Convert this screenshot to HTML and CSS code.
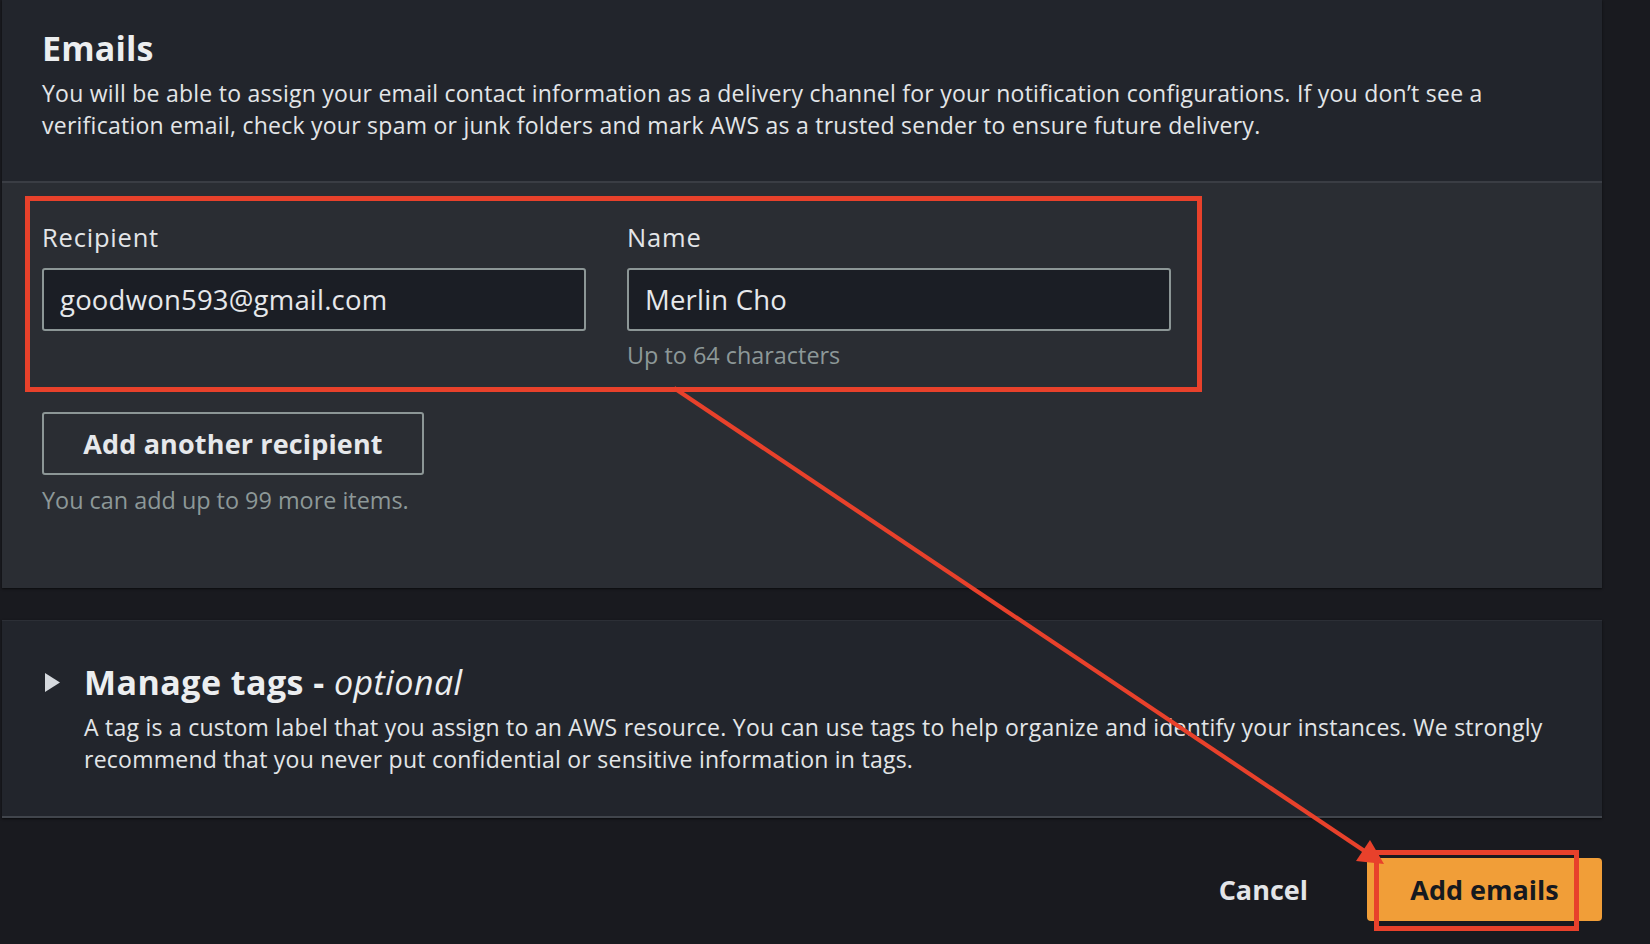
FILE: index.html
```html
<!DOCTYPE html>
<html lang="en">
<head>
<meta charset="utf-8">
<title>Emails</title>
<link rel="stylesheet" href="styles.css">
</head>
<body>
<div class="page">
  <section class="panel">
    <header class="panel-head">
      <h2 class="panel-title">Emails</h2>
      <p class="panel-desc">You will be able to assign your email contact information as a delivery channel for your notification configurations. If you don’t see a verification email, check your spam or junk folders and mark AWS as a trusted sender to ensure future delivery.</p>
    </header>
    <div class="panel-body">
      <div class="fields">
        <div class="field">
          <label class="field-label" for="recipient">Recipient</label>
          <input class="field-input" id="recipient" type="text" value="goodwon593@gmail.com" readonly>
        </div>
        <div class="field">
          <label class="field-label" for="name">Name</label>
          <input class="field-input" id="name" type="text" value="Merlin Cho" readonly>
          <div class="hint hint-field">Up to 64 characters</div>
        </div>
      </div>
      <button class="btn-normal" type="button">Add another recipient</button>
      <div class="hint hint-items">You can add up to 99 more items.</div>
    </div>
  </section>

  <section class="panel panel-tags">
    <div class="tags-head">
      <svg class="caret" width="15" height="19" viewBox="0 0 15 19"><polygon points="0,0 15,9.5 0,19" fill="#d5d9de"/></svg>
      <h2 class="panel-title title-tags">Manage tags - <i>optional</i></h2>
    </div>
    <p class="panel-desc tags-desc">A tag is a custom label that you assign to an AWS resource. You can use tags to help organize and identify your instances. We strongly recommend that you never put confidential or sensitive information in tags.</p>
  </section>

  <div class="actions">
    <button class="btn-link" type="button">Cancel</button>
    <button class="btn-primary" type="button">Add emails</button>
  </div>
</div>

<div class="annot annot-form"></div>
<div class="annot annot-btn"></div>
<svg class="arrow" width="1650" height="944" viewBox="0 0 1650 944">
  <line x1="674" y1="388" x2="1366" y2="852" stroke="#e8412b" stroke-width="4.2"/>
  <polygon points="1356,861 1370,840 1384,864" fill="#e8412b"/>
</svg>
</body>
</html>
```

FILE: styles.css
```css
* { box-sizing: border-box; }

body {
  margin: 0;
  width: 1650px;
  height: 944px;
  overflow: hidden;
  position: relative;
  background: #191a1f;
  font-family: "Open Sans", "Noto Sans", sans-serif;
  color: #e9ebed;
}

.page {
  width: 1600px;
  margin-left: 2px;
}

.panel {
  background: #22252c;
  box-shadow: 0 1px 2px rgba(0, 0, 0, 0.6);
}

.panel-head {
  padding: 28px 40px 40px 40px;
  border-bottom: 2px solid #3a3d44;
}

.panel-title {
  margin: 0;
  font-size: 34px;
  line-height: 40px;
  font-weight: 700;
  color: #eceef0;
  letter-spacing: 0.15px;
}

.title-tags {
  letter-spacing: 0.45px;
}

.panel-title i {
  font-weight: 400;
  font-style: italic;
}

.panel-desc {
  margin: 10px 0 0 0;
  font-size: 23px;
  line-height: 31.5px;
  color: #e3e5e8;
  letter-spacing: 0.25px;
}

.panel-body {
  background: #2a2d33;
  padding: 38px 40px 72px 40px;
}

.fields {
  display: grid;
  grid-template-columns: 544px 544px;
  column-gap: 41px;
}

.field {
  display: flex;
  flex-direction: column;
}

.field-label {
  font-size: 25.5px;
  line-height: 32px;
  margin-bottom: 15px;
  color: #e3e5e8;
  letter-spacing: 0.8px;
}

.field-input {
  width: 544px;
  height: 63px;
  border: 2px solid #8c9696;
  border-radius: 3px;
  background: #1b1e25;
  color: #e6e8eb;
  font-family: "Open Sans", "Noto Sans", sans-serif;
  font-size: 27.5px;
  letter-spacing: 0.2px;
  padding: 0 16px;
  outline: none;
}

.hint {
  font-size: 23.4px;
  line-height: 32px;
  color: #8d9898;
}

.hint-field {
  margin-top: 8px;
}

.btn-normal {
  display: block;
  margin-top: 41px;
  height: 63px;
  width: 382px;
  padding: 0;
  border: 2px solid #8c9696;
  border-radius: 3px;
  background: transparent;
  color: #e6e8eb;
  font-family: "Open Sans", "Noto Sans", sans-serif;
  font-size: 27px;
  font-weight: 700;
  letter-spacing: 0.15px;
}

.hint-items {
  margin-top: 9px;
}

.panel-tags {
  margin-top: 32px;
  padding: 41px 40px 41px 43px;
  border-top: 1px solid #2c2f36;
  border-bottom: 2px solid #41454c;
}

.tags-head {
  display: flex;
  align-items: center;
  gap: 24px;
}

.caret {
  display: block;
  flex: none;
}

.tags-desc {
  margin-left: 39px;
}

.actions {
  display: flex;
  justify-content: flex-end;
  align-items: center;
  margin-top: 40px;
  gap: 33px;
}

.btn-link {
  background: none;
  border: none;
  padding: 0 26px;
  color: #e3e5e8;
  font-family: "Open Sans", "Noto Sans", sans-serif;
  font-size: 27px;
  font-weight: 700;
  line-height: 63px;
}

.btn-primary {
  width: 235px;
  height: 63px;
  border: none;
  border-radius: 4px;
  background: #f19e38;
  color: #16191f;
  font-family: "Open Sans", "Noto Sans", sans-serif;
  font-size: 27px;
  font-weight: 700;
  padding: 0;
}

.annot {
  position: absolute;
  border: 5px solid #e8412b;
  pointer-events: none;
}

.annot-form {
  left: 25px;
  top: 196px;
  width: 1177px;
  height: 196px;
}

.annot-btn {
  left: 1374px;
  top: 850px;
  width: 205px;
  height: 81px;
}

.arrow {
  position: absolute;
  left: 0;
  top: 0;
  pointer-events: none;
}
```
